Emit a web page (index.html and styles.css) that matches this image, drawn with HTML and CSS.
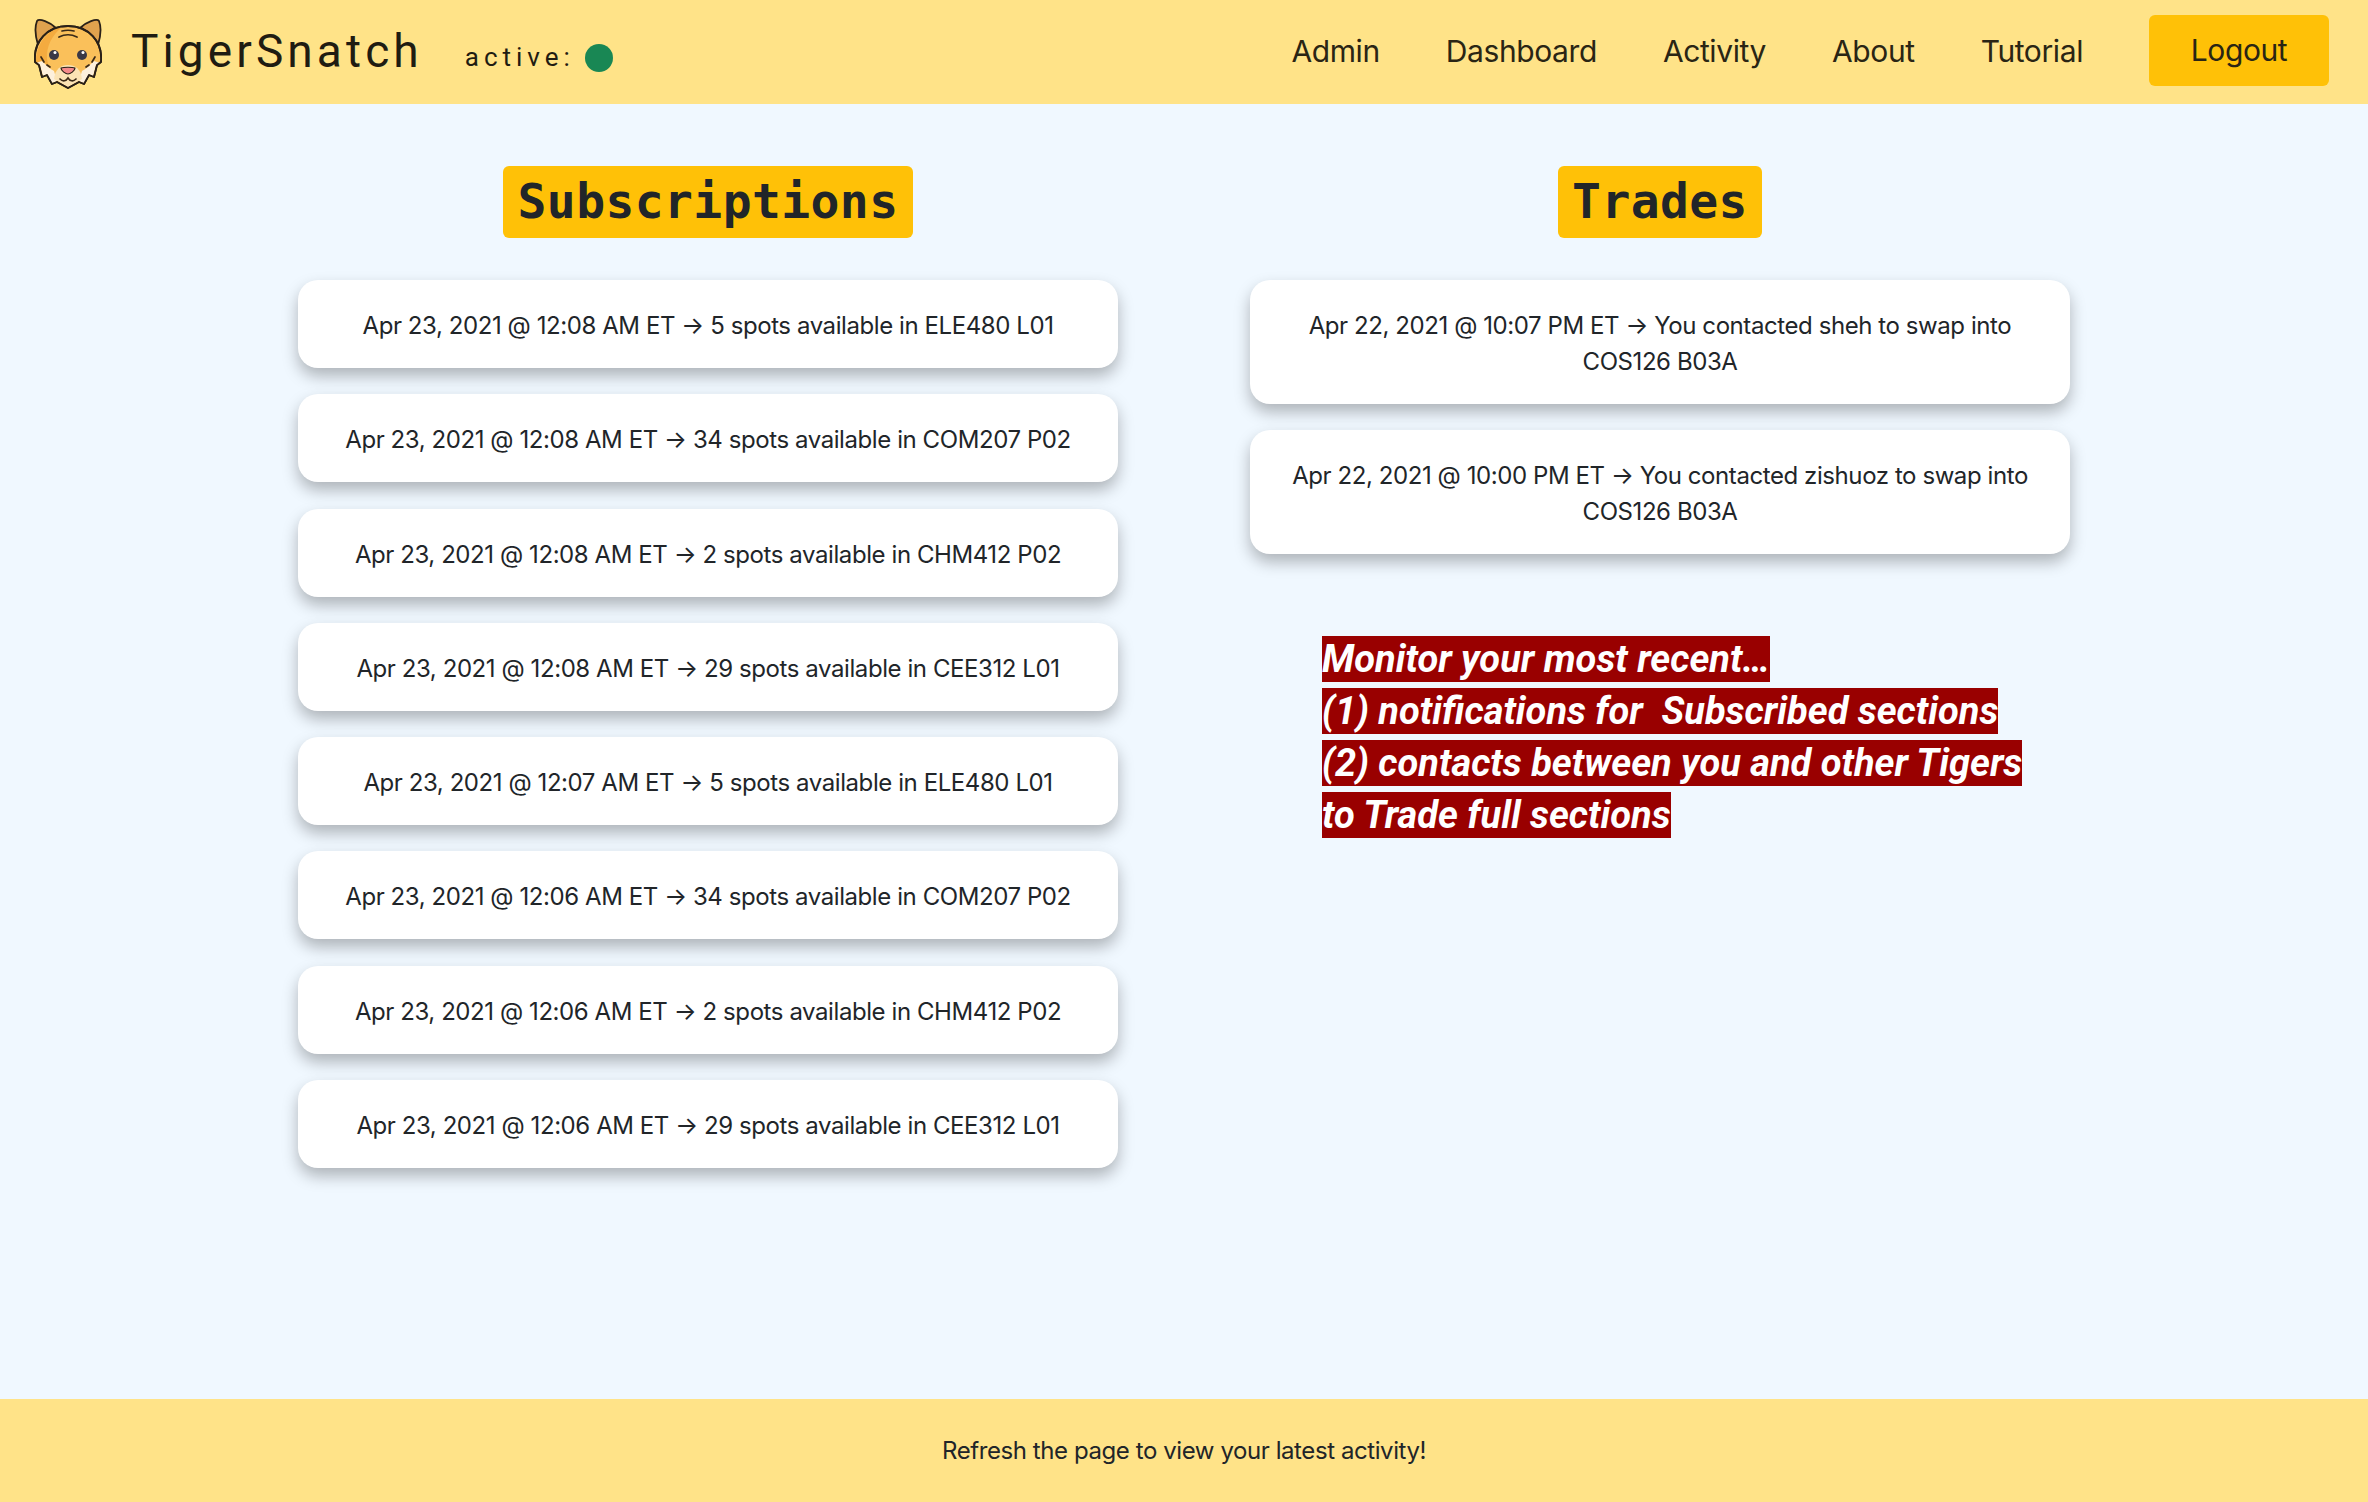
FILE: index.html
```html
<!DOCTYPE html>
<html lang="en">
<head>
<meta charset="utf-8">
<title>TigerSnatch</title>
<link rel="stylesheet" href="styles.css">
</head>
<body>
<header class="topbar">
  <div class="brand">
    <svg class="logo" viewBox="34 18 68 72" aria-hidden="true">
      <g stroke="#2a2118" stroke-width="1.8" stroke-linejoin="round" stroke-linecap="round">
        <path d="M38 46 C35 36 35 27 37 22 C39 19 50 23 56 29 Z" fill="#e0a24e"/>
        <path d="M98 46 C101 36 101 27 99 22 C97 19 86 23 80 29 Z" fill="#e0a24e"/>
        <path d="M35 63 C33 42 48 27 68 27 C88 27 103 42 101 63 L97 66 L94 78 L89 76 L84 85 L79 83 L68 89 L57 83 L52 85 L47 76 L42 78 L39 66 Z" fill="#fac05a"/>
      </g>
      <path d="M36 62 C37 44 48 30 62 28 C52 36 46 48 47 60 C48 66 50 70 52 72 L40 66 Z" fill="#f4ab3f"/>
      <path d="M36 64 L42 62 C46 66 50 70 54 72 L57 82 L52 84 L47 75 L43 77 L40 66 Z" fill="#fdf0dc"/>
      <path d="M100 64 L94 62 C90 66 86 70 82 72 L79 82 L84 84 L89 75 L93 77 L96 66 Z" fill="#fdf0dc"/>
      <path d="M54 80 C55 70 61 66 68 66 C75 66 81 70 82 80 L68 88 Z" fill="#fbe3b4"/>
      <path d="M35 63 C33 42 48 27 68 27 C88 27 103 42 101 63 L97 66 L94 78 L89 76 L84 85 L79 83 L68 89 L57 83 L52 85 L47 76 L42 78 L39 66 Z" fill="none" stroke="#2a2118" stroke-width="1.8" stroke-linejoin="round"/>
      <g fill="none" stroke="#3a2a18" stroke-width="1.7" stroke-linecap="round">
        <path d="M62 32 C66 31 70 31 74 32"/>
        <path d="M59 38 C65 35 71 35 77 38"/>
        <path d="M41 58 L44 63"/>
        <path d="M95 58 L92 63"/>
        <path d="M47 66 L50 68"/>
        <path d="M89 66 L86 68"/>
        <path d="M60 80 C63 83 66 82 68 79 C70 82 73 83 76 80"/>
      </g>
      <circle cx="54" cy="56" r="5" fill="#3a3846"/>
      <circle cx="82" cy="56" r="5" fill="#3a3846"/>
      <circle cx="55" cy="53.5" r="1.5" fill="#fff"/>
      <circle cx="83" cy="53.5" r="1.5" fill="#fff"/>
      <path d="M61 69 C64 68 72 68 75 69 C75 72 70 75 68 75 C66 75 61 72 61 69 Z" fill="#f58a8a" stroke="#2a2118" stroke-width="1.2" stroke-linejoin="round"/>
    </svg>
    <span class="brand-name">TigerSnatch</span>
    <span class="status">active:</span>
    <span class="status-dot"></span>
  </div>
  <nav class="nav">
    <a class="nav-link">Admin</a>
    <a class="nav-link">Dashboard</a>
    <a class="nav-link">Activity</a>
    <a class="nav-link">About</a>
    <a class="nav-link">Tutorial</a>
    <a class="logout">Logout</a>
  </nav>
</header>

<main class="content">
  <section class="column">
    <h2 class="badge">Subscriptions</h2>
    <div class="card">Apr 23, 2021 @ 12:08 AM ET → 5 spots available in ELE480 L01</div>
    <div class="card">Apr 23, 2021 @ 12:08 AM ET → 34 spots available in COM207 P02</div>
    <div class="card">Apr 23, 2021 @ 12:08 AM ET → 2 spots available in CHM412 P02</div>
    <div class="card">Apr 23, 2021 @ 12:08 AM ET → 29 spots available in CEE312 L01</div>
    <div class="card">Apr 23, 2021 @ 12:07 AM ET → 5 spots available in ELE480 L01</div>
    <div class="card">Apr 23, 2021 @ 12:06 AM ET → 34 spots available in COM207 P02</div>
    <div class="card">Apr 23, 2021 @ 12:06 AM ET → 2 spots available in CHM412 P02</div>
    <div class="card">Apr 23, 2021 @ 12:06 AM ET → 29 spots available in CEE312 L01</div>
  </section>
  <section class="column">
    <h2 class="badge">Trades</h2>
    <div class="card">Apr 22, 2021 @ 10:07 PM ET → You contacted sheh to swap into COS126 B03A</div>
    <div class="card">Apr 22, 2021 @ 10:00 PM ET → You contacted zishuoz to swap into COS126 B03A</div>
    <p class="callout"><span class="callout-text">Monitor your most recent…<br>(1) notifications for&nbsp; Subscribed sections<br>(2) contacts between you and other Tigers<br>to Trade full sections</span></p>
  </section>
</main>

<footer class="footer">Refresh the page to view your latest activity!</footer>
</body>
</html>
```
FILE: styles.css
```css
* { box-sizing: border-box; }

html, body { margin: 0; padding: 0; }

body {
  min-height: 100vh;
  display: flex;
  flex-direction: column;
  background: #f0f8ff;
  color: #212529;
  font-family: "Inter", "Liberation Sans", sans-serif;
  font-size: 24px;
  line-height: 36px;
  letter-spacing: -0.42px;
}

.topbar {
  height: 104px;
  flex: none;
  display: flex;
  align-items: center;
  justify-content: space-between;
  padding: 0 39px 3px 34px;
  background: #ffe388;
}

.brand { display: flex; align-items: center; }

.logo { width: 68px; height: 72px; margin-top: 5px; display: block; }

.brand-name {
  margin-left: 29px;
  font-family: "Roboto", sans-serif;
  font-size: 46px;
  letter-spacing: 4.1px;
  line-height: 60px;
  color: #1f1c12;
}

.status {
  margin-left: 42px;
  margin-top: 12px;
  font-family: "Roboto", sans-serif;
  font-size: 26px;
  letter-spacing: 5px;
  color: #1f1c12;
}

.status-dot {
  width: 28px;
  height: 28px;
  margin: 15px 0 0 10px;
  border-radius: 50%;
  background: #198754;
}

.nav { display: flex; align-items: center; }

.nav-link {
  margin-right: 66px;
  font-size: 30px;
  letter-spacing: -0.4px;
  color: #2a2514;
}

.logout {
  width: 180px;
  height: 71px;
  padding-bottom: 2px;
  display: flex;
  align-items: center;
  justify-content: center;
  border-radius: 6px;
  background: #ffc107;
  font-size: 30px;
  letter-spacing: -0.4px;
  color: #2a2514;
}

.content {
  flex: 1;
  width: 1904px;
  margin: 0 auto;
  padding-top: 62px;
  display: grid;
  grid-template-columns: 1fr 1fr;
}

.column {
  padding: 0 66px;
  display: flex;
  flex-direction: column;
  align-items: stretch;
}

.badge {
  align-self: center;
  height: 72px;
  margin: 0 0 42px;
  padding: 0 14.5px;
  border-radius: 6px;
  background: #ffc107;
  font-family: "DejaVu Sans Mono", monospace;
  font-size: 48px;
  font-weight: 700;
  letter-spacing: 0.4px;
  line-height: 70px;
}

.card {
  margin-bottom: 26.3px;
  padding: 28px 26px 24px;
  border-radius: 20px;
  background: #fff;
  box-shadow: 0 8px 16px rgba(0, 0, 0, 0.28);
  text-align: center;
}

.callout {
  margin: 52px 0 0;
  padding-left: 72px;
  font-family: "Roboto", sans-serif;
  font-size: 38px;
  font-style: italic;
  font-weight: 700;
  letter-spacing: 0;
  line-height: 52px;
}

.callout-text {
  padding: 1px 0;
  background: #990000;
  color: #fff;
}

.footer {
  height: 103px;
  flex: none;
  display: flex;
  align-items: center;
  justify-content: center;
  background: #ffe388;
}
```
